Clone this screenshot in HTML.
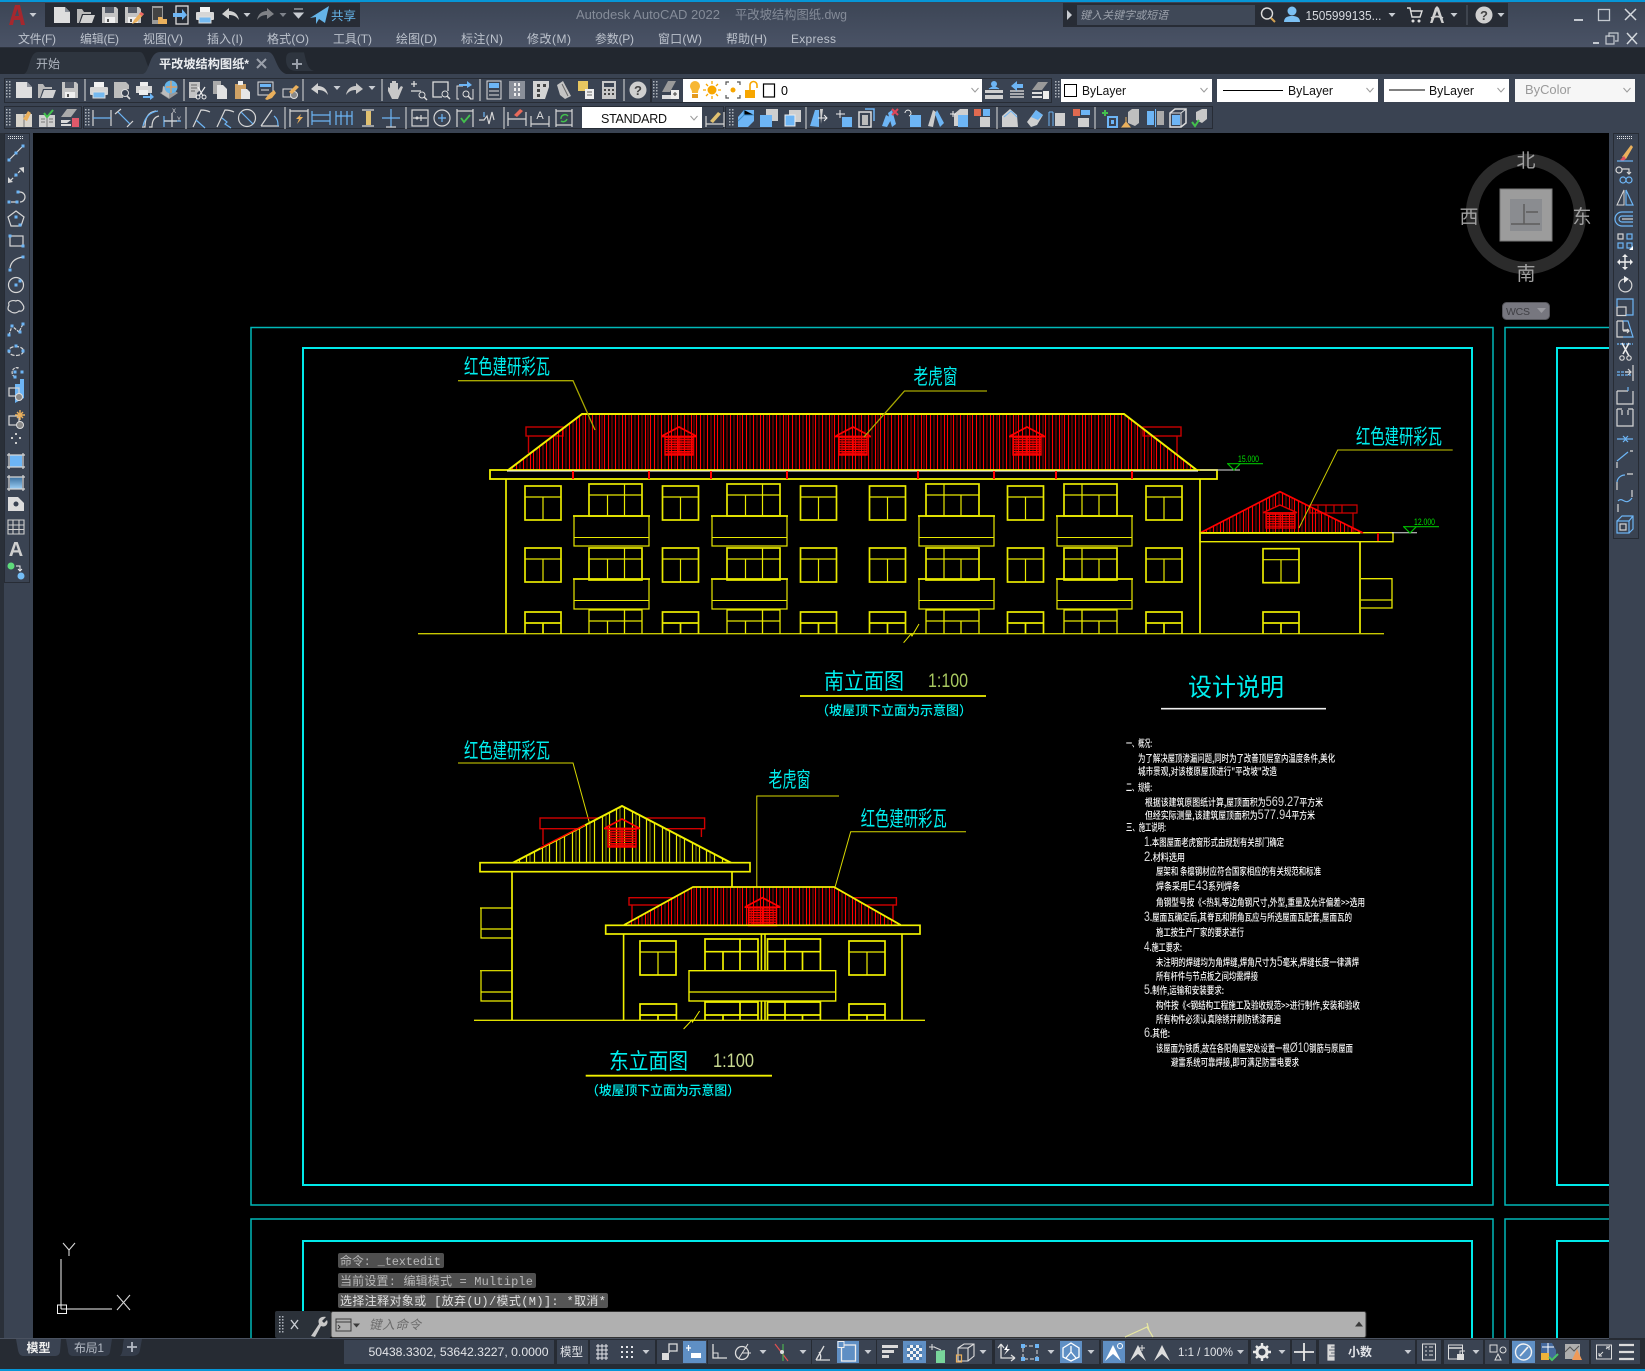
<!DOCTYPE html>
<html><head><meta charset="utf-8"><title>AutoCAD 2022</title>
<style>
html,body{margin:0;padding:0;background:#000;width:1645px;height:1371px;overflow:hidden}
svg{display:block}
text{font-family:"Liberation Sans","Noto Sans CJK SC",sans-serif}
.m{font-size:12px;fill:#bcc2cc}
.cad{fill:#00eeee;font-family:"Noto Sans CJK SC","Liberation Sans",sans-serif;font-weight:400}
.sub{font-weight:500}
.n{font-size:10px;fill:#f6f6f6;font-weight:500;font-family:"Noto Sans CJK SC","Liberation Sans",sans-serif}
.n tspan{font-size:14px;font-family:"Liberation Sans",sans-serif;font-weight:400;fill:#d8d8d8}
.cm{font-family:"Liberation Mono","Noto Sans CJK SC",monospace;font-size:12px;fill:#b8b8b8}
.bar{fill:#3a4352;stroke:#272c35;stroke-width:1}
.sb{fill:#3a4352}
.hi{fill:#5f8fc4}
.st{font-size:12px;fill:#e2e4e8}
.l{fill:none;stroke:#d6d6d6;stroke-width:1.2}
.b{fill:none;stroke:#6db5f5;stroke-width:1.2}
</style></head><body>
<svg xmlns="http://www.w3.org/2000/svg" width="1645" height="1371" viewBox="0 0 1645 1371">
<defs>
<linearGradient id="tg" x1="0" y1="0" x2="0" y2="1"><stop offset="0" stop-color="#3c4555"/><stop offset="1" stop-color="#4a5366"/></linearGradient>
<pattern id="rf" width="46" height="10" patternUnits="userSpaceOnUse">
<path d="M1.5 0v10M6.5 0v10M10.5 0v10M17.5 0v10M24.5 0v10M27.5 0v10M33.5 0v10M40.5 0v10" stroke="#f00" stroke-width="1.1"/><path d="M4 0v10M14 0v10M21 0v10M31 0v10M37 0v10M44 0v10" stroke="#a00000" stroke-width="1"/>
</pattern>
<pattern id="ry" width="30" height="10" patternUnits="userSpaceOnUse">
<path d="M2.5 0v10M9.5 0v10M16.5 0v10M24.5 0v10" stroke="#e8e800" stroke-width="1.2"/><path d="M6 0v10M20 0v10" stroke="#8c8c00" stroke-width="1"/>
</pattern>
<pattern id="sl" width="4" height="2.4" patternUnits="userSpaceOnUse"><rect width="4" height="1.2" fill="#f00"/></pattern>
<g id="dm" fill="none" stroke="#f00" stroke-width="1.4"><path d="M-17 9L0 0L17 9M-18 9.5H18" stroke-width="1.7"/><rect x="-14" y="10" width="28" height="18" fill="url(#sl)"/><path d="M0 10v18"/><rect x="-11" y="12" width="22" height="14" fill="url(#sl)" stroke="#d00" stroke-width=".8"/></g>
<g id="ws"><rect width="36" height="34"/><path d="M0 11H36M18 11V34" stroke-width="1.2"/></g>
<g id="wsb"><path d="M0 22V0H36V22M0 11H36M18 11V22" /></g>
<g id="wl"><rect width="53" height="32"/><path d="M0 11H53M35.5 0V32M18.5 11V32" stroke-width="1.2"/></g>
<g id="wr"><rect width="53" height="32"/><path d="M0 11H53M18 0V32M35 11V32" stroke-width="1.2"/></g>
<g id="wlb"><path d="M0 24V0H53V24M0 11H53M35.5 0V24M18.5 11V24" stroke-width="1.3"/></g>
<g id="wrb"><path d="M0 24V0H53V24M0 11H53M18 0V24M35 11V24" stroke-width="1.3"/></g>
<g id="bl"><rect width="75" height="30" stroke-width="1.2"/><path d="M-1 0H76" stroke-width="1.8"/><path d="M0 21.5H75" stroke-width="1.1"/></g>

<g id="new"><path d="M-8-8H3L8-3V8H-8z" fill="#dedede"/><path d="M3-8V-3H8" fill="#8a8f98"/></g>
<g id="open"><path d="M-9 8V-6H-4L-2-3H5V-1H-4L-7 8z" fill="#b8b8b8"/><path d="M-6 8L-3 0H9L6 8z" fill="#d2d2d2"/></g>
<g id="save"><path d="M-8-8H6L8-6V8H-8z" fill="#c4c4c4"/><rect x="-5" y="-8" width="9" height="6" fill="#555c69"/><rect x="-5" y="2" width="10" height="6" fill="#efefef"/><rect x="-3" y="4" width="2" height="3" fill="#555"/></g>
<g id="saves"><use href="#save"/><path d="M-1 9L1 5 8-3 11-1 4 7z" fill="#eab05c"/><path d="M8-3L11-1 9 1 6-1z" fill="#e66"/></g>
<g id="plot"><rect x="-5" y="-8" width="10" height="5" fill="#f2f2f2"/><rect x="-9" y="-3" width="18" height="8" fill="#d6d6d6" rx="1"/><rect x="-6" y="2" width="12" height="6" fill="#74b9f0" stroke="#ddd"/></g>
<g id="prev"><path d="M-8-8H4L7-5V-1L1 0V8H-8z" fill="#bdbdbd"/><circle cx="3" cy="3" r="3.5" fill="#3a4352" stroke="#ddd"/><path d="M5 6L8 9" stroke="#ddd" stroke-width="1.6"/></g>
<g id="pub"><rect x="-4" y="-8" width="8" height="4" fill="#eee"/><rect x="-8" y="-4" width="16" height="7" fill="#d6d6d6"/><rect x="-5" y="0" width="9" height="5" fill="#eee"/><path d="M-1 6H6V3L10 7 6 10V8H-1z" fill="#6db5f5"/></g>
<g id="d3"><path d="M-9 3L0-3 9 3 0 9z" fill="#9a9a9a"/><path d="M-7 4L0 8V-1L-6 -4z" fill="#bcbcbc"/><circle cx="2" cy="-3" r="6.5" fill="#65b4e8"/><path d="M-3-3H8M2-9V3" stroke="#ee9b50" stroke-width="1.2"/></g>
<g id="cut"><path d="M-8-8H3V0L0 3V8H-8z" fill="#c4c4c4"/><path d="M-6-5H0M-6-2H0M-6 1H-2" stroke="#666"/><path d="M1-3L6 6M8-3L2 6" stroke="#eee" stroke-width="1.2"/><circle cx="1" cy="7" r="2" fill="none" stroke="#eee"/><circle cx="7" cy="7" r="2" fill="none" stroke="#eee"/></g>
<g id="copy"><path d="M-7-9H1V4H-7z" fill="#aaa"/><path d="M-3-5H3L7-1V9H-3z" fill="#e2e2e2"/></g>
<g id="paste"><rect x="-7" y="-6" width="11" height="15" fill="#d0a265"/><rect x="-4" y="-9" width="5" height="4" fill="#eee"/><path d="M-1-1H5L8 2V9H-1z" fill="#e6e6e6"/></g>
<g id="mp"><rect x="-8" y="-8" width="15" height="13" fill="none" stroke="#ddd"/><rect x="-6" y="-6" width="11" height="3" fill="#6db5f5"/><path d="M-5 0H3" stroke="#ddd"/><path d="M-1 9L3 4 8 0 10 3 6 8 1 10z" fill="#eab05c"/></g>
<g id="blk"><rect x="-7" y="-1" width="10" height="8" fill="none" stroke="#ddd"/><circle cx="4" cy="5" r="3.5" fill="#888" stroke="#ddd"/><path d="M-1 2L6-5 9-3 2 4z" fill="#eab05c"/></g>
<path id="und" d="M-8-1L-1-7V-4C4-4 8-1 9 5 6 1 3 0-1 0V4z" fill="#d0d0d0"/>
<path id="red" d="M8-1L1-7V-4C-4-4-8-1-9 5-6 1-3 0 1 0V4z" fill="#c8c8c8"/>
<path id="ar" d="M-3.5-2H3.5L0 2z" fill="#c8ccd2"/>
<path id="chv" d="M-3.5-2L0 2 3.5-2" fill="none" stroke="#9a9a9a" stroke-width="1"/>
<path id="pan" d="M-7 1V-3L-5-2V-7H-3V-2-9H-1V-3-9H1V-2-7H3V0L6-4 8-3 3 9H-3z" fill="#c8c8c8"/>
<g id="zr"><path d="M-7-6H-1M-4-9V-3M-7 1H3" stroke="#ddd" stroke-width="1.3"/><circle cx="4" cy="5" r="3" fill="none" stroke="#ddd"/><path d="M6 7L9 10" stroke="#ddd" stroke-width="1.4"/></g>
<g id="zw"><path d="M1 7H-8V-8H7V1" fill="none" stroke="#ddd" stroke-width="1.3"/><circle cx="4" cy="4" r="3" fill="none" stroke="#ddd"/><path d="M6 6L9 9" stroke="#ddd" stroke-width="1.4"/></g>
<g id="zp"><path d="M-6 9H-8V-4H-2M8-1V9H5" fill="none" stroke="#ddd"/><path d="M-6-6H2V-9L7-5 2-2V-4H-6z" fill="#6db5f5"/><circle cx="1" cy="4" r="3" fill="none" stroke="#ddd"/><path d="M3 6L6 9" stroke="#ddd" stroke-width="1.4"/></g>
<g id="prop"><rect x="-7" y="-9" width="14" height="18" fill="none" stroke="#ddd"/><rect x="-5" y="-7" width="10" height="5" fill="#6db5f5"/><path d="M-5 1H5M-5 5H5" stroke="#ddd"/></g>
<g id="dc"><rect x="-8" y="-9" width="16" height="18" fill="#8b909a"/><path d="M-3-7h2v3h-2zM1-7h2v3H1zM-3-2h2v3h-2zM1-2h2v3H1zM-3 3h2v3h-2zM1 3h2v3H1z" fill="#eee"/></g>
<g id="tp"><path d="M-8-9H8V-3L4 9H-8z" fill="#d4d4d4"/><path d="M-4-6h3v3h-3zM-4-1h3v3h-3zM-4 4h3v3h-3zM2-6h3v3H2z" fill="#444"/></g>
<g id="ss"><path d="M-7-5L-1-9 7 6 1 9-4 5z" fill="#c4c4c4"/><path d="M-2-6L4 6" stroke="#666"/></g>
<g id="mk"><rect x="-8" y="-9" width="10" height="10" fill="#e7c660"/><rect x="-1" y="-1" width="9" height="10" fill="#eee"/><path d="M1 2H6M1 5H6" stroke="#666"/></g>
<g id="calc"><rect x="-7" y="-9" width="14" height="18" fill="#c8c8c8"/><rect x="-5" y="-7" width="10" height="4" fill="#3a4352"/><path d="M-5-1h2v2h-2zM-1-1h2v2h-2zM3-1h2v2H3zM-5 3h2v2h-2zM-1 3h2v2h-2zM3 3h2v2H3z" fill="#444"/></g>
<g id="hp"><circle r="8.5" fill="#cfcfcf"/><text y="5" text-anchor="middle" font-size="13" font-weight="bold" style="fill:#444">?</text></g>
<g id="lay"><path d="M-8 2L-2-9H6L0 2z" fill="#9a9a9a"/><path d="M-8 5H1V9H-8z" fill="#ddd"/><rect x="1" y="0" width="8" height="9" fill="#eee"/><path d="M3 4H7M5 2V6" stroke="#444"/></g>
<g id="lm"><path d="M-9 9H9V5H-9zM-9 3H9V0H-9z" fill="#cfcfcf"/><circle cx="0" cy="-6" r="3" fill="#6db5f5"/><path d="M-5-1Q0-5 5-1" fill="#6db5f5" stroke="#6db5f5"/></g>
<g id="lp"><path d="M-7 4H7M-7 7H7M-7 1H7" stroke="#ccc" stroke-width="1.6"/><path d="M-6-4L0-9V-6H6V-2H0V1z" fill="#6db5f5"/></g>
<g id="lt"><path d="M-8 0L-2-8H8L2 0z" fill="#9a9a9a"/><path d="M-8 2H2V4H-8zM-8 6H2V8H-8z" fill="#ddd"/><rect x="3" y="1" width="6" height="8" fill="#eee"/></g>

<g id="e1"><rect x="-8" y="-4" width="16" height="13" fill="#d8d4cc"/><path d="M0-4V9" stroke="#777"/><path d="M-1 1L4-7 7-5 3 3z" fill="#eab05c"/></g>
<g id="e2"><rect x="-8" y="-3" width="16" height="12" fill="#cfcfcf"/><path d="M0-3V9M-6 1H-2M-6 4H-2M2 1H6M2 4H6" stroke="#777"/><path d="M-3-5L0-1 6-8" stroke="#43c14d" stroke-width="2" fill="none"/></g>
<g id="e3"><path d="M-9-1L-3-9H7L1-1z" fill="#aaa"/><path d="M-9 2H1L-3 5H-9zM-9 6H1V8H-9z" fill="#d8d8d8"/><rect x="2" y="0" width="7" height="9" fill="#e0596a"/></g>
<g id="dl"><path d="M-9-8V8M9-8V8" class="l"/><path d="M-9 0H9" class="b"/></g>
<g id="da"><path d="M-9-4L-3-9M3 9L9 3" class="l"/><path d="M-6-6L6 6" class="b"/></g>
<g id="dr"><path d="M-8 9H-5C-5 0-2-6 6-7M-1 9H2C2 3 4-1 9-2" class="l" stroke-width="1"/><path d="M-7 8C-5-1 0-6 8-7" class="b"/></g>
<g id="do"><path d="M-8 9V-2M-8 3H9" class="b"/><path d="M0-5V9M-8 3H5" class="l" stroke-width="1"/><text x="0" y="-5" font-size="6" style="fill:#ddd">X</text><text x="5" y="3" font-size="6" style="fill:#ddd">Y</text></g>
<g id="dar"><path d="M-8 9L0-8C4-8 7-7 9-6" class="l"/><path d="M-5 2L4 10" class="b"/></g>
<g id="dj"><path d="M-8 9L0-8C4-8 7-7 9-6" class="l"/><path d="M-3 0L2 4 0 6 6 10" class="b"/></g>
<g id="dd"><circle r="8.5" class="l"/><path d="M-6-6L6 6" class="b"/></g>
<g id="dg"><path d="M-9 8H9M-9 8L2-8" class="l"/><path d="M4-2C8 1 8 5 8 8" class="b"/></g>
<g id="dq"><path d="M-9-9V9M9-9V9M-9-7H9" class="l"/><path d="M2-4L-3 1H0L-2 6 4-1H1z" fill="#eab05c"/></g>
<g id="db"><path d="M-9-7V7M9-7V7M-9-3H9M-9 3H9" class="b"/></g>
<g id="dc2"><path d="M-8-7V7M-3-7V7M3-7V7M8-7V7M-8-2H8" class="b"/></g>
<g id="dsp"><path d="M-6-8H6M-6 8H6" class="l"/><rect x="-2" y="-7" width="5" height="14" fill="#e0c070"/></g>
<g id="dbk"><path d="M0-9V9M-9 0H9" class="b"/><path d="M-5 9H5" class="l"/></g>
<g id="dtl"><rect x="-8" y="-8" width="16" height="16" class="l"/><circle cx="-3" cy="0" r="1.5" fill="#ddd"/><path d="M-7 0H7M1-3V3" class="l" stroke-width="1"/></g>
<g id="dcm"><circle r="8" class="l"/><path d="M-4 0H4M0-4V4" class="b"/></g>
<g id="din"><path d="M-8-9V9M8-9V9M-8-7H8" class="l"/><path d="M-4 0L-1 4 5-3" stroke="#43c14d" stroke-width="1.8" fill="none"/></g>
<g id="djg"><path d="M-9 2H-4L-1-2 1 6 4-6 6 2" class="l"/><path d="M-4-6V-1" class="b"/></g>
<g id="dte"><path d="M-9-6V8M9-6V8M-9 1H9" class="l"/><path d="M-3-3L3-9 6-7 0-1z" fill="#e96a5a"/></g>
<g id="dta"><path d="M-9-2V9M9-2V9M-9 6H9" class="l"/><text y="1" text-anchor="middle" font-size="11" style="fill:#ddd">A</text></g>
<g id="du"><path d="M-8-9V9M8-9V9M-8-7H8M-8 7H8" class="l"/><path d="M-3 1A4 4 0 0 1 4-2M3 1A4 4 0 0 1-3 3" stroke="#43c14d" stroke-width="1.4" fill="none"/></g>
<g id="dst"><path d="M-9-2V9M9-6V9M-9 6H9" class="l"/><path d="M-5 3L3-6 6-4-2 5z" fill="#e0c070"/></g>
<g id="c1"><path d="M-8 9V-1L-2-8H8V3L2 9z" fill="#6db5f5"/><path d="M-2-8V-3H8M-2-3L-8 3" stroke="#3a8ac8"/></g>
<g id="c2"><path d="M-3 3V-9H9V3z" fill="#cfcfcf"/><path d="M-9 9V-3H3V9z" fill="#6db5f5"/></g>
<g id="c3"><path d="M-3 4V-8H9V4z" fill="#cfcfcf"/><rect x="-7" y="-3" width="10" height="11" fill="#6db5f5" stroke="#eee"/></g>
<g id="c4"><path d="M-8 8L-3-8H1V9z" fill="#6db5f5"/><path d="M2-9H5L3 6z" fill="#ccc"/><path d="M0 0H9M6-3L9 0 6 3" stroke="#eee" fill="none"/></g>
<g id="c5"><path d="M-8-4H0M-4-8V0" stroke="#eee" fill="none"/><rect x="-2" y="-1" width="10" height="10" fill="#6db5f5"/><path d="M-4-4H1" stroke="#eee"/></g>
<g id="c6"><rect x="-7" y="-6" width="12" height="15" fill="none" stroke="#ddd" stroke-width="1.5"/><rect x="-4" y="-3" width="6" height="10" fill="#bbb"/><path d="M-1-9H8V3" stroke="#6db5f5" stroke-width="1.5" fill="none"/></g>
<g id="c7"><path d="M-8 8L-4-3 2 0-3 9zM-2-5L2-8 6 6 2 9z" fill="#6db5f5"/><path d="M2-9L8-3M8-9L2-3" stroke="#e0465a" stroke-width="2"/></g>
<g id="c8"><path d="M-8-5A3 3 0 1 1-4-2" stroke="#eee" fill="none"/><rect x="-3" y="-3" width="11" height="12" fill="#6db5f5"/></g>
<g id="c9"><path d="M-8 8L-3-8 0-6-3 9z" fill="#ccc"/><path d="M1-8L8 5 4 9-1-4z" fill="#6db5f5"/></g>
<g id="c10"><path d="M-5-4L1-9H9V3L4 8H-5z" fill="#cfcfcf"/><rect x="-1" y="-3" width="10" height="12" fill="#6db5f5"/><path d="M-9-4H-3M-6-7V-1" stroke="#eee"/></g>
<g id="c11"><rect x="-8" y="-9" width="7" height="7" fill="#e06a50"/><rect x="1" y="-9" width="7" height="7" fill="#6db5f5"/><rect x="-2" y="-1" width="10" height="10" fill="#cfcfcf"/></g>
<g id="c12"><path d="M-8 9V-2L0-9 7-3 8 9z" fill="#cfcfcf"/><path d="M-6-1L1-7 7-1" stroke="#6db5f5" fill="none"/></g>
<g id="c13"><path d="M-7 4L2-8 9-3 3 7-3 9z" fill="#cfcfcf"/><path d="M-3-1L2-8 9-3 4 2z" fill="#6db5f5"/></g>
<g id="c14"><rect x="-2" y="-5" width="10" height="13" fill="#cfcfcf"/><path d="M-8-6V8M-4-6V8M-8-6H-4" stroke="#6db5f5" fill="none"/></g>
<g id="c15"><path d="M0-8H9V-3H0z" fill="#6db5f5"/><rect x="-8" y="-9" width="7" height="7" fill="#e06a50"/><rect x="-3" y="0" width="11" height="9" fill="#cfcfcf"/></g>
<g id="c16"><path d="M-9-5H-3M-6-8V-2" stroke="#43c14d" stroke-width="2"/><rect x="-3" y="-1" width="9" height="10" fill="none" stroke="#6db5f5" stroke-width="2"/><rect x="0" y="2" width="3" height="4" fill="#6db5f5"/></g>
<g id="c17"><path d="M-3 5V-6L1-9H8V5L4 8z" fill="#bfbfbf"/><path d="M-5-1V4M-9 9L-5 4-1 9z" fill="#eab05c" stroke="#eab05c"/></g>
<g id="c18"><rect x="-8" y="-7" width="7" height="14" fill="#6db5f5"/><rect x="2" y="-7" width="7" height="14" fill="#aaa"/><path d="M.5-9V9" stroke="#6db5f5"/></g>
<g id="c19"><path d="M-8-5L-3-9H8V5L3 9H-8z" fill="none" stroke="#ddd" stroke-width="1.5"/><rect x="-6" y="-3" width="8" height="10" fill="#6db5f5"/><path d="M-8-5H3V9M3-5L8-9" stroke="#ddd" fill="none"/></g>
<g id="c20"><path d="M-4 2V-6L2-9H7V1L2 5z" fill="#c8c8c8"/><path d="M-8 4L-5 8-1 2" stroke="#43c14d" stroke-width="2" fill="none"/></g>
<path id="dot" d="M-1.5-1.5h3v3h-3z" fill="#6db5f5"/>
<g id="hd" fill="#aeb4bc"><rect x="-2" y="-9" width="1.5" height="1.5"/><rect x="1" y="-9" width="1.5" height="1.5"/><rect x="-2" y="-6" width="1.5" height="1.5"/><rect x="1" y="-6" width="1.5" height="1.5"/><rect x="-2" y="-3" width="1.5" height="1.5"/><rect x="1" y="-3" width="1.5" height="1.5"/><rect x="-2" y="0" width="1.5" height="1.5"/><rect x="1" y="0" width="1.5" height="1.5"/><rect x="-2" y="3" width="1.5" height="1.5"/><rect x="1" y="3" width="1.5" height="1.5"/><rect x="-2" y="6" width="1.5" height="1.5"/><rect x="1" y="6" width="1.5" height="1.5"/></g>
<g id="sep"><path d="M0-11V11" stroke="#dcdcdc" stroke-width="1"/></g>
<linearGradient id="gd" x1="0" y1="0" x2="0" y2="1"><stop offset="0" stop-color="#3a6f9e"/><stop offset="1" stop-color="#9ccff5"/></linearGradient>
</defs>

<!-- app chrome base -->
<rect width="1645" height="1371" fill="#3a4352"/>
<rect y="0" width="1645" height="2" fill="#0696d7"/>
<rect y="2" width="1645" height="46" fill="url(#tg)"/>
<rect y="48" width="1645" height="26" fill="#22272f"/>
<rect y="47" width="1645" height="1" fill="#2c323c"/>

<!-- title bar -->
<path d="M9 25L15 5H20L25 25H21L20 20H14L13 25zM15 16H19L17.5 9z" fill="#a5282e"/>
<use href="#ar" x="33" y="15"/>
<rect x="45" y="3" width="315" height="24" fill="#272c35"/>
<use href="#new" x="62" y="15"/><use href="#open" x="86" y="15"/><use href="#save" x="110" y="15"/><use href="#saves" x="133" y="15"/>
<g transform="translate(158 15)"><rect x="-6" y="-9" width="11" height="18" fill="#9a9a9a"/><rect x="-5" y="-7" width="9" height="12" fill="#444"/><path d="M0 2H4L5 4H9V9H0z" fill="#eab05c"/></g>
<g transform="translate(182 15)"><rect x="-6" y="-9" width="12" height="18" fill="none" stroke="#ddd" stroke-width="1.3"/><path d="M-9-2H0V-6L5 0 0 5V2H-9z" fill="#6db5f5"/></g>
<use href="#plot" x="205" y="15"/><use href="#und" x="230" y="15"/><use href="#ar" x="247" y="15"/><use href="#red" x="266" y="15" opacity=".55"/><use href="#ar" x="283" y="15" opacity=".55"/>
<path d="M294 9h9M294 13h9l-4.500 5z" fill="#c8ccd2" stroke="#c8ccd2"/>
<path d="M310 18L329 6 325 23 319 19 316 24V17z" fill="#65b4e8"/>
<text x="331" y="20" font-size="12" textLength="25" lengthAdjust="spacingAndGlyphs" style="fill:#65b4e8">共享</text>
<text x="576" y="19" font-size="13" textLength="144" lengthAdjust="spacingAndGlyphs" style="fill:#858c99">Autodesk AutoCAD 2022</text>
<text x="735" y="19" font-size="12.500" textLength="112" lengthAdjust="spacingAndGlyphs" style="fill:#858c99">平改坡结构图纸.dwg</text>
<rect x="1063" y="3" width="445" height="24" fill="#272c35"/>
<path d="M1067 10L1072 15 1067 20z" fill="#c8ccd2"/>
<rect x="1077" y="5" width="178" height="20" fill="#3f4857"/>
<text x="1080" y="19" font-size="11" font-style="italic" textLength="88" style="fill:#9aa0aa">键入关键字或短语</text>
<circle cx="1267" cy="13.500" r="5.500" fill="none" stroke="#ddd" stroke-width="1.4"/><path d="M1271 18L1275 22" stroke="#d2a050" stroke-width="2"/>
<circle cx="1292" cy="11" r="4.500" fill="#7cc0f2"/><path d="M1284 22C1284 17 1288 16 1292 16S1300 17 1300 22z" fill="#7cc0f2"/>
<text x="1305.500" y="20" font-size="12.500" textLength="76" lengthAdjust="spacingAndGlyphs" style="fill:#d8dbe0">1505999135...</text>
<use href="#ar" x="1392" y="15"/>
<path d="M1407 8H1410L1412 17H1420L1422 11H1411" fill="none" stroke="#ddd" stroke-width="1.4"/><circle cx="1413" cy="21" r="1.500" fill="#ddd"/><circle cx="1419" cy="21" r="1.500" fill="#ddd"/>
<path d="M1430 23L1435 8 1437 6 1439 8 1444 23H1441.500L1437 11 1432.500 23z" fill="#d0d0d0"/><path d="M1431 18Q1437 15 1443 18" stroke="#d0d0d0" stroke-width="1.800" fill="none"/>
<use href="#ar" x="1454" y="15"/>
<path d="M1467 5V25" stroke="#555c68"/>
<use href="#hp" x="1484" y="15"/><use href="#ar" x="1501" y="15"/>
<path d="M1574 20H1583" stroke="#c4c9d0" stroke-width="2"/>
<rect x="1598.500" y="9.500" width="11" height="11" fill="none" stroke="#c4c9d0" stroke-width="1.300"/>
<path d="M1625 9L1636 20M1636 9L1625 20" stroke="#d4d8dd" stroke-width="1.500"/>
<path d="M1593 43H1599" stroke="#c4c9d0" stroke-width="2"/>
<path d="M1609 37V33H1618V41H1615M1606 36H1614V44H1606z" fill="none" stroke="#c4c9d0" stroke-width="1.200"/>
<path d="M1627 33L1637 44M1637 33L1627 44" stroke="#d4d8dd" stroke-width="1.500"/>

<!-- menu -->
<text class="m" x="18" y="43" textLength="38">文件(F)</text>
<text class="m" x="80" y="43" textLength="39">编辑(E)</text>
<text class="m" x="143" y="43" textLength="40">视图(V)</text>
<text class="m" x="207" y="43" textLength="36">插入(I)</text>
<text class="m" x="267" y="43" textLength="42">格式(O)</text>
<text class="m" x="333" y="43" textLength="39">工具(T)</text>
<text class="m" x="396" y="43" textLength="41">绘图(D)</text>
<text class="m" x="461" y="43" textLength="42">标注(N)</text>
<text class="m" x="527" y="43" textLength="44">修改(M)</text>
<text class="m" x="595" y="43" textLength="39">参数(P)</text>
<text class="m" x="658" y="43" textLength="44">窗口(W)</text>
<text class="m" x="726" y="43" textLength="41">帮助(H)</text>
<text class="m" x="791" y="43" textLength="45">Express</text>

<!-- doc tabs -->
<path d="M24 74C30 72 29 52 38 52H140C146 52 146 70 154 74z" fill="#2e353f"/>
<path d="M143 74C150 72 149 52 160 52H268C276 52 275 70 286 74z" fill="#3a4352"/>
<path d="M286 60C286 54 288 52 292 52H304C306 60 307 70 314 72H296C290 72 286 68 286 60z" fill="#2e353f" transform="translate(0 4) scale(1 .93)"/>
<text x="36" y="68" font-size="12" textLength="24" style="fill:#b0b6c0">开始</text>
<text x="159" y="68" font-size="12" textLength="90" lengthAdjust="spacingAndGlyphs" font-weight="bold" style="fill:#eceef1">平改坡结构图纸*</text>
<path d="M257 59L266 68M266 59L257 68" stroke="#9aa0aa" stroke-width="2"/>
<path d="M297 59V69M292 64H302" stroke="#9aa0aa" stroke-width="2"/>

<!-- toolbar row 1 -->
<rect x="4.500" y="78.500" width="646" height="24" class="bar"/>
<rect x="651.500" y="78.500" width="400" height="24" class="bar"/>
<rect x="1055.500" y="78.500" width="581" height="24" class="bar" style="stroke:none"/>
<use href="#hd" x="8" y="90"/>
<use href="#new" x="24" y="90"/><use href="#open" x="47" y="90"/><use href="#save" x="70" y="90"/><use href="#sep" x="85" y="90"/>
<use href="#plot" x="99" y="90"/><use href="#prev" x="122" y="90"/><use href="#pub" x="144" y="90"/><use href="#d3" x="169" y="90"/><use href="#sep" x="184" y="90"/>
<use href="#cut" x="197" y="90"/><use href="#copy" x="220" y="90"/><use href="#paste" x="242" y="90"/><use href="#mp" x="266" y="90"/><use href="#blk" x="290" y="90"/><use href="#sep" x="303" y="90"/>
<use href="#und" x="319" y="90"/><use href="#ar" x="337" y="88"/><use href="#red" x="355" y="90"/><use href="#ar" x="372" y="88"/><use href="#sep" x="382" y="90"/>
<use href="#pan" x="395" y="90"/><use href="#zr" x="418" y="90"/><use href="#zw" x="441" y="90"/><use href="#zp" x="465" y="90"/><use href="#sep" x="480" y="90"/>
<use href="#prop" x="494" y="90"/><use href="#dc" x="517" y="90"/><use href="#tp" x="541" y="90"/><use href="#ss" x="564" y="90"/><use href="#mk" x="586" y="90"/><use href="#calc" x="609" y="90"/><use href="#sep" x="624" y="90"/><use href="#hp" x="638" y="90"/>
<use href="#hd" x="655" y="90"/><use href="#lay" x="670" y="90"/>
<rect x="683" y="79" width="299" height="23" fill="#fff"/>
<g transform="translate(695 90)"><path d="M-3 3C-3-1-5-1-5-4A5 5 0 0 1 5-4C5-1 3-1 3 3z" fill="#f7b733"/><path d="M-3 4H3V8H-3z" fill="#e49a1e"/></g>
<g transform="translate(712 90)"><circle r="4.500" fill="#f7a600"/><path d="M0-9V-6M0 6V9M-9 0H-6M6 0H9M-6-6L-4-4M6-6L4-4M-6 6L-4 4M6 6L4 4" stroke="#f7a600" stroke-width="1.300"/></g>
<g transform="translate(733 90)"><path d="M-7-5V-8H-4M4-8H7V-5M7 5V8H4M-4 8H-7V5" fill="none" stroke="#555" stroke-width="1.200"/><circle r="2.500" fill="#f7a600"/></g>
<g transform="translate(751 90)"><rect x="-6" y="0" width="10" height="8" fill="#f7a600"/><path d="M-1 0V-5A3.500 3.500 0 0 1 6-5V-2" fill="none" stroke="#f7a600" stroke-width="1.600"/></g>
<rect x="763.500" y="84" width="11" height="13" fill="#fff" stroke="#000" stroke-width="1.200"/>
<text x="781" y="95" font-size="12.500" style="fill:#000">0</text>
<use href="#chv" x="975" y="90"/>
<use href="#lm" x="994" y="90"/><use href="#lp" x="1017" y="90"/><use href="#lt" x="1040" y="90"/>
<use href="#hd" x="1057" y="90"/>
<rect x="1061" y="79" width="151" height="23" fill="#fff"/><rect x="1064.500" y="84.500" width="12" height="12" fill="#fff" stroke="#000"/>
<text x="1082" y="95" font-size="12.500" textLength="44" lengthAdjust="spacingAndGlyphs" style="fill:#111">ByLayer</text><use href="#chv" x="1204" y="90"/>
<rect x="1217" y="79" width="161" height="23" fill="#fff"/><path d="M1223 90.500H1283" stroke="#000"/>
<text x="1288" y="95" font-size="12.500" textLength="45" lengthAdjust="spacingAndGlyphs" style="fill:#111">ByLayer</text><use href="#chv" x="1370" y="90"/>
<rect x="1384" y="79" width="125" height="23" fill="#fff"/><path d="M1389 90H1425" stroke="#000"/>
<text x="1429" y="95" font-size="12.500" textLength="45" lengthAdjust="spacingAndGlyphs" style="fill:#111">ByLayer</text><use href="#chv" x="1501" y="90"/>
<rect x="1515" y="79" width="120" height="23" fill="#f6f6f6"/>
<text x="1525" y="94" font-size="12.500" textLength="46" lengthAdjust="spacingAndGlyphs" style="fill:#9a9a9a">ByColor</text><use href="#chv" x="1627" y="90"/>

<!-- toolbar row 2 -->
<rect x="4.500" y="106.500" width="77" height="22" class="bar"/>
<rect x="83.500" y="106.500" width="640" height="22" class="bar"/>
<rect x="725.500" y="106.500" width="487" height="22" class="bar"/>
<use href="#hd" x="8" y="118"/><use href="#e1" x="24" y="118"/><use href="#e2" x="47" y="118"/><use href="#e3" x="70" y="118"/>
<use href="#hd" x="87" y="118"/><use href="#dl" x="102" y="118"/><use href="#da" x="124" y="118"/><use href="#dr" x="150" y="118"/><use href="#do" x="172" y="118"/><use href="#sep" x="186" y="118"/>
<use href="#dar" x="201" y="118"/><use href="#dj" x="225" y="118"/><use href="#dd" x="247" y="118"/><use href="#dg" x="270" y="118"/><use href="#sep" x="285" y="118"/>
<use href="#dq" x="299" y="118"/><use href="#db" x="321" y="118"/><use href="#dc2" x="344" y="118"/><use href="#dsp" x="368" y="118"/><use href="#dbk" x="391" y="118"/><use href="#sep" x="406" y="118"/>
<use href="#dtl" x="420" y="118"/><use href="#dcm" x="442" y="118"/><use href="#din" x="465" y="118"/><use href="#djg" x="488" y="118"/><use href="#sep" x="504" y="118"/>
<use href="#dte" x="517" y="118"/><use href="#dta" x="540" y="118"/><use href="#du" x="564" y="118"/>
<rect x="582" y="107" width="120" height="21" fill="#fff"/>
<text x="601" y="123" font-size="12.500" textLength="66" style="fill:#111">STANDARD</text><use href="#chv" x="694" y="118"/>
<use href="#dst" x="715" y="118"/>
<use href="#hd" x="731" y="118"/>
<use href="#c1" x="746" y="118"/><use href="#c2" x="769" y="118"/><use href="#c3" x="792" y="118"/><use href="#sep" x="806" y="118"/>
<use href="#c4" x="818" y="118"/><use href="#c5" x="844" y="118"/><use href="#c6" x="866" y="118"/><use href="#c7" x="890" y="118"/><use href="#c8" x="913" y="118"/><use href="#c9" x="936" y="118"/><use href="#c10" x="959" y="118"/><use href="#c11" x="982" y="118"/><use href="#sep" x="997" y="118"/>
<use href="#c12" x="1010" y="118"/><use href="#c13" x="1034" y="118"/><use href="#c14" x="1057" y="118"/><use href="#c15" x="1081" y="118"/><use href="#sep" x="1095" y="118"/>
<use href="#c16" x="1111" y="118"/><use href="#c17" x="1131" y="118"/><use href="#c18" x="1155" y="118"/><use href="#c19" x="1178" y="118"/><use href="#c20" x="1200" y="118"/>

<!-- side panels -->
<rect y="133" width="4" height="1205" fill="#2a3039"/>
<rect x="4.500" y="133.500" width="25" height="449" class="bar"/>
<rect x="1613.500" y="133.500" width="25" height="405" class="bar"/>

<!-- canvas -->
<rect x="33" y="133" width="1576" height="1205" fill="#000"/>

<!-- frames -->
<g fill="none">
<g stroke="#00b8b8" stroke-width="1.500"><rect x="251" y="327.500" width="1242" height="877.500"/><path d="M1609 327.500H1505V1205H1609"/><path d="M251 1338V1219H1493V1338M1505 1338V1219H1609"/></g>
<g stroke="#00eaea" stroke-width="2"><rect x="303" y="348" width="1169" height="837"/><path d="M1609 348H1557V1185H1609"/><path d="M303 1338V1241H1472V1338M1557 1338V1241H1609"/></g>
</g>

<!-- SOUTH ELEVATION -->
<g fill="none" stroke="#c80000" stroke-width="1.400"><rect x="526" y="427" width="37" height="9"/><path d="M528.500 436V453"/><rect x="1143" y="427" width="38" height="9"/><path d="M1177 436V455"/></g>
<polygon points="582,414 1124,414 1198,470 507,470" fill="url(#rf)"/>
<path d="M507 471L582 414H1124L1198 471" fill="none" stroke="#f0f000" stroke-width="2"/>
<use href="#dm" x="679" y="427"/><use href="#dm" x="853" y="427"/><use href="#dm" x="1027" y="427"/>
<rect x="490" y="470" width="727" height="9" fill="none" stroke="#f0f000" stroke-width="1.800"/>
<path d="M507 471H1198" stroke="#fff" stroke-width="1"/>
<path d="M573 471V479M649 471V479M711 471V479M787 471V479M918 471V479M994 471V479M1056 471V479M1132 471V479" stroke="#f00" stroke-width="2"/>
<g fill="none" stroke="#e8e800" stroke-width="1.700">
<path d="M506 479V634M1200 479V634M1360 541V634" stroke="#f0f000"/>
<path d="M418 633.700H1384" stroke="#c8c800" stroke-width="1.300"/>
<use href="#ws" x="525" y="486"/><use href="#ws" x="662.500" y="486"/><use href="#ws" x="800.500" y="486"/><use href="#ws" x="869.500" y="486"/><use href="#ws" x="1007.500" y="486"/><use href="#ws" x="1146" y="486"/>
<use href="#ws" x="525" y="548"/><use href="#ws" x="662.500" y="548"/><use href="#ws" x="800.500" y="548"/><use href="#ws" x="869.500" y="548"/><use href="#ws" x="1007.500" y="548"/><use href="#ws" x="1146" y="548"/>
<use href="#wsb" x="525" y="612"/><use href="#wsb" x="662.500" y="612"/><use href="#wsb" x="800.500" y="612"/><use href="#wsb" x="869.500" y="612"/><use href="#wsb" x="1007.500" y="612"/><use href="#wsb" x="1146" y="612"/>
<use href="#wl" x="589" y="484"/><use href="#wl" x="727" y="484"/><use href="#wr" x="926" y="484"/><use href="#wr" x="1064" y="484"/>
<use href="#wl" x="589" y="548"/><use href="#wl" x="727" y="548"/><use href="#wr" x="926" y="548"/><use href="#wr" x="1064" y="548"/>
<use href="#wlb" x="589" y="610"/><use href="#wlb" x="727" y="610"/><use href="#wrb" x="926" y="610"/><use href="#wrb" x="1064" y="610"/>
<use href="#bl" x="574" y="516"/><use href="#bl" x="712" y="516"/><use href="#bl" x="919" y="516"/><use href="#bl" x="1057" y="516"/>
<use href="#bl" x="574" y="579"/><use href="#bl" x="712" y="579"/><use href="#bl" x="919" y="579"/><use href="#bl" x="1057" y="579"/>
<use href="#ws" x="1263" y="548.700"/><use href="#wsb" x="1263" y="612"/>
<rect x="1200" y="532.700" width="193" height="9" stroke-width="1.400"/>
<path d="M1361 578.700H1392V608H1361M1361 600H1392" stroke-width="1.300"/>
<path d="M903.600 642.700L911 634 912 636 919 624" stroke-width="1"/>
</g>
<!-- annex roof -->
<g fill="none" stroke="#d00000" stroke-width="1.200"><path d="M1310 505H1357V513H1310zM1353 513V532M1318 505V513M1326 505V513M1334 505V513M1342 505V513"/></g>
<polygon points="1280,491.700 1363,532 1201,532" fill="url(#rf)"/>
<path d="M1201 532.500L1280 491.700 1363 533" fill="none" stroke="#f00" stroke-width="1.700"/>
<g fill="none" stroke="#e00000" stroke-width="1.400"><path d="M1263 512.700L1280 505 1297 512.700z" fill="#000"/><rect x="1266" y="513" width="29" height="15" fill="url(#sl)"/><path d="M1280.500 513V528"/></g>
<path d="M1201 533H1360" stroke="#f0f000" stroke-width="1.800"/>
<path d="M1378 533V541" stroke="#d00" stroke-width="2"/>
<path d="M1200 470H1240M1392 532.700H1417" stroke="#e0e0e0" stroke-width="1"/>
<g stroke="#00c000" stroke-width="1.200" fill="none"><path d="M1227 463.700H1263M1228 464L1234 470 1240 464M1403 526.700H1439M1404 527L1410 533 1416 527"/></g>
<text x="1238" y="462" font-size="9" textLength="21" lengthAdjust="spacingAndGlyphs" style="fill:#00e000">15.000</text>
<text x="1414" y="525" font-size="9" textLength="21" lengthAdjust="spacingAndGlyphs" style="fill:#00e000">12.000</text>
<g fill="none" stroke="#a8a800" stroke-width="1.300">
<path d="M458 380.700H573L595 430"/>
<path d="M987 391H904.500L864 437"/>
<path d="M1452.700 450H1337.700L1299 528" stroke="#c8c800" stroke-width="1"/>
<path d="M458 763H573L594.600 841.700" stroke="#d8d800" stroke-width="1"/>
<path d="M839 796H756.800V913" stroke="#d8d800" stroke-width="1"/>
<path d="M966 831.700H850.700L828.600 910" stroke="#d8d800" stroke-width="1"/>
</g>
<text class="cad" x="464" y="374" font-size="21" textLength="86" lengthAdjust="spacingAndGlyphs">红色建研彩瓦</text>
<text class="cad" x="913.500" y="384" font-size="21" textLength="44" lengthAdjust="spacingAndGlyphs">老虎窗</text>
<text class="cad" x="1356" y="444" font-size="21" textLength="86" lengthAdjust="spacingAndGlyphs">红色建研彩瓦</text>
<text class="cad" x="824" y="689" font-size="22" textLength="80" lengthAdjust="spacingAndGlyphs">南立面图</text>
<text x="928" y="687" font-size="19" textLength="40" lengthAdjust="spacingAndGlyphs" style="fill:#a8c860">1:100</text>
<path d="M800 696H986" stroke="#f0f000" stroke-width="1.800"/>
<text class="cad sub" x="816" y="715" font-size="13" textLength="156" lengthAdjust="spacingAndGlyphs">（坡屋顶下立面为示意图）</text>
<text class="cad" x="1188" y="696" font-size="25" textLength="96" lengthAdjust="spacingAndGlyphs">设计说明</text>
<path d="M1161 708.700H1326" stroke="#eee" stroke-width="1.600"/>

<!-- EAST ELEVATION -->
<g fill="none" stroke="#d00000" stroke-width="1.400"><rect x="540" y="818" width="164.600" height="10.700"/><path d="M543 829V845M701.400 829V837"/><rect x="629" y="897.700" width="267.400" height="7.300"/><path d="M632 905V922M893 905V922"/></g>
<polygon points="622,806 731,862 513,862" fill="#000"/>
<polygon points="622,806 731,862 513,862" fill="url(#ry)"/>
<path d="M513 862.700L622 806 731 862.700" fill="none" stroke="#f0f000" stroke-width="2"/>
<path d="M540 848L585 825" stroke="#f00" stroke-width="1.300"/>
<use href="#dm" x="622" y="819"/>
<g fill="none" stroke="#f0f000" stroke-width="1.700">
<rect x="480" y="862.700" width="270" height="9"/>
<path d="M512 871.700V1020M732 871.700V886.700"/>
<path d="M474 1020.300H925" stroke="#e0e000" stroke-width="1.400"/>
<path d="M480 908H511.500M481 908V938H511.500M481 929H511.500M480 970.700H511.500M481 970.700V1001H511.500M481 992H511.500" stroke-width="1.200"/>
</g>
<polygon points="693,887 834,887 900.700,925 624,925" fill="#000"/>
<polygon points="693,887 834,887 900.700,925 624,925" fill="url(#rf)"/>
<path d="M624 925L693 887H834L900.700 925" fill="none" stroke="#f0f000" stroke-width="1.800"/>
<use href="#dm" x="762.500" y="897.700"/>
<g fill="none" stroke="#f0f000" stroke-width="1.700">
<rect x="605.700" y="925.300" width="314.300" height="8.700"/>
<path d="M623.600 934V1020M902 934V1020M761.400 934V971M765 934V971M761.400 1001V1020M765 1001V1020" stroke-width="1.600"/>
<use href="#ws" x="640" y="941"/><use href="#ws" x="849" y="941"/>
<path d="M640 1020V1004H676.400V1020M640 1015H676.400M658 1015V1020M849 1020V1004H885V1020M849 1015H885M867 1015V1020"/>
<path d="M705 971V939H758V971M705 951.700H758M740 939V971M723 951.700V971"/>
<path d="M767.500 971V939H820.400V971M767.500 951.700H820.400M785 939V971M802.500 951.700V971"/>
<rect x="689" y="970.700" width="146.700" height="30.300" stroke-width="1.400"/><path d="M689 992H835.700" stroke-width="1.200"/>
<path d="M705 1020V1002H758V1020M705 1015H758M740 1002V1020M723 1015V1020M767.500 1020V1002H820.400V1020M767.500 1015H820.400M785 1002V1020M802.500 1015V1020"/>
<path d="M683.600 1029L692 1020 692.500 1022 699.600 1011" stroke-width="1"/>
</g>
<text class="cad" x="464" y="758" font-size="21" textLength="86" lengthAdjust="spacingAndGlyphs">红色建研彩瓦</text>
<text class="cad" x="768.500" y="787" font-size="21" textLength="42" lengthAdjust="spacingAndGlyphs">老虎窗</text>
<text class="cad" x="860.700" y="826" font-size="21" textLength="86" lengthAdjust="spacingAndGlyphs">红色建研彩瓦</text>
<text class="cad" x="609" y="1069" font-size="22" textLength="79" lengthAdjust="spacingAndGlyphs">东立面图</text>
<text x="713" y="1067" font-size="19" textLength="41" lengthAdjust="spacingAndGlyphs" style="fill:#c8d890">1:100</text>
<path d="M585.700 1075.700H772" stroke="#f0f000" stroke-width="1.800"/>
<text class="cad sub" x="586" y="1095" font-size="13" textLength="154" lengthAdjust="spacingAndGlyphs">（坡屋顶下立面为示意图）</text>

<!-- notes -->
<g>
<text class="n" x="1126" y="747" textLength="26" lengthAdjust="spacingAndGlyphs">一、概况:</text>
<text class="n" x="1138" y="762" textLength="197" lengthAdjust="spacingAndGlyphs">为了解决屋顶渗漏问题,同时为了改善顶层室内温度条件,美化</text>
<text class="n" x="1138" y="775" textLength="139" lengthAdjust="spacingAndGlyphs">城市景观,对该楼原屋顶进行"平改坡"改造</text>
<text class="n" x="1126" y="791" textLength="26" lengthAdjust="spacingAndGlyphs">二、规模:</text>
<text class="n" x="1145" y="806" textLength="178" lengthAdjust="spacingAndGlyphs">根据该建筑原图纸计算,屋顶面积为<tspan>569.27</tspan>平方米</text>
<text class="n" x="1145" y="819" textLength="170" lengthAdjust="spacingAndGlyphs">但经实际测量,该建筑屋顶面积为<tspan>577.94</tspan>平方米</text>
<text class="n" x="1126" y="831" textLength="40" lengthAdjust="spacingAndGlyphs">三、施工说明:</text>
<text class="n" x="1144" y="846" textLength="140" lengthAdjust="spacingAndGlyphs"><tspan>1</tspan>.本图屋面老虎窗形式由规划有关部门确定</text>
<text class="n" x="1144" y="861" textLength="41" lengthAdjust="spacingAndGlyphs"><tspan>2</tspan>.材料选用</text>
<text class="n" x="1156" y="875" textLength="165" lengthAdjust="spacingAndGlyphs">屋架和 条檩钢材应符合国家相应的有关规范和标准</text>
<text class="n" x="1156" y="890" textLength="84" lengthAdjust="spacingAndGlyphs">焊条采用<tspan>E43</tspan>系列焊条</text>
<text class="n" x="1156" y="906" textLength="209" lengthAdjust="spacingAndGlyphs">角钢型号按《&lt;热轧等边角钢尺寸,外型,重量及允许偏差&gt;&gt;选用</text>
<text class="n" x="1144" y="921" textLength="208" lengthAdjust="spacingAndGlyphs"><tspan>3</tspan>.屋面瓦确定后,其脊瓦和阴角瓦应与所选屋面瓦配套,屋面瓦的</text>
<text class="n" x="1156" y="936" textLength="88" lengthAdjust="spacingAndGlyphs">施工按生产厂家的要求进行</text>
<text class="n" x="1144" y="951" textLength="38" lengthAdjust="spacingAndGlyphs"><tspan>4</tspan>.施工要求:</text>
<text class="n" x="1156" y="966" textLength="203" lengthAdjust="spacingAndGlyphs">未注明的焊缝均为角焊缝,焊角尺寸为<tspan>5</tspan>毫米,焊缝长度一律满焊</text>
<text class="n" x="1156" y="980" textLength="102" lengthAdjust="spacingAndGlyphs">所有杆件与节点板之间均需焊接</text>
<text class="n" x="1144" y="994" textLength="80" lengthAdjust="spacingAndGlyphs"><tspan>5</tspan>.制作,运输和安装要求:</text>
<text class="n" x="1156" y="1009" textLength="204" lengthAdjust="spacingAndGlyphs">构件按《&lt;钢结构工程施工及验收规范&gt;&gt;进行制作,安装和验收</text>
<text class="n" x="1156" y="1023" textLength="125" lengthAdjust="spacingAndGlyphs">所有构件必须认真除锈并刷防锈漆两遍</text>
<text class="n" x="1144" y="1037" textLength="26" lengthAdjust="spacingAndGlyphs"><tspan>6</tspan>.其他:</text>
<text class="n" x="1156" y="1052" textLength="197" lengthAdjust="spacingAndGlyphs">该屋面为铁质,故在各阳角屋架处设置一根<tspan>Ø10</tspan>钢筋与原屋面</text>
<text class="n" x="1171" y="1066" textLength="128" lengthAdjust="spacingAndGlyphs">避雷系统可靠焊接,即可满足防雷电要求</text>
</g>

<!-- viewcube -->
<circle cx="1526" cy="214" r="54" fill="none" stroke="#2b2b2b" stroke-width="12.500"/>
<rect x="1500" y="189" width="52" height="52" fill="#9c9c9c" stroke="#777" stroke-width="1"/>
<rect x="1510" y="199" width="32" height="32" fill="#8a8c90"/>
<path d="M1524 204V224M1511 224H1540M1526 212H1538" stroke="#5c5c5c" stroke-width="1.500" fill="none"/>
<g font-size="19" text-anchor="middle">
<text x="1526" y="167" style="fill:#a0a0a0">北</text><text x="1526" y="280" style="fill:#a0a0a0">南</text><text x="1582" y="223" style="fill:#a0a0a0">东</text><text x="1469" y="223" style="fill:#a0a0a0">西</text>
</g>
<rect x="1502.500" y="302.500" width="47" height="17" rx="4" fill="#77777f" stroke="#55555b"/>
<text x="1506" y="315" font-size="10.500" textLength="24" style="fill:#3f3f44">WCS</text>
<path d="M1537 308H1546L1541.500 313z" fill="#9a9aa0"/>

<!-- UCS -->
<path d="M61 1259V1309M61 1309H112" stroke="#f2f2f2" stroke-width="1"/>
<rect x="57.500" y="1305" width="9" height="8.500" fill="none" stroke="#f2f2f2"/>
<path d="M63 1243L69 1250 75 1243M69 1250V1256M117 1295L130 1310M130 1295L117 1310" fill="none" stroke="#d8d8d8" stroke-width="1.100"/>

<!-- Left toolbar icons -->
<g transform="translate(16 0)">
<g fill="#e0e2e6"><rect x="-8" y="136" width="1" height="1"/><rect x="-6" y="136" width="1" height="1"/><rect x="-4" y="136" width="1" height="1"/><rect x="-2" y="136" width="1" height="1"/><rect x="0" y="136" width="1" height="1"/><rect x="2" y="136" width="1" height="1"/><rect x="4" y="136" width="1" height="1"/><rect x="6" y="136" width="1" height="1"/><rect x="-8" y="138" width="1" height="1"/><rect x="-6" y="138" width="1" height="1"/><rect x="-4" y="138" width="1" height="1"/><rect x="-2" y="138" width="1" height="1"/><rect x="0" y="138" width="1" height="1"/><rect x="2" y="138" width="1" height="1"/><rect x="4" y="138" width="1" height="1"/><rect x="6" y="138" width="1" height="1"/></g>
<path d="M-7 160L7 146" class="l"/><use href="#dot" x="-7" y="160"/><use href="#dot" x="0" y="153"/><use href="#dot" x="7" y="146"/>
<path d="M-8 183V177L-3 182zM8 167V173L3 168z" fill="#d6d6d6"/><path d="M-5 180L5 170" class="l" stroke-dasharray="3 2"/><use href="#dot" x="0" y="175"/>
<path d="M-5 202H0M2 192H4A5 5 0 0 1 4 202" class="l"/><use href="#dot" x="-7" y="202"/><use href="#dot" x="1" y="202"/><use href="#dot" x="2" y="192"/>
<path d="M0 211L8 217 5 226H-5L-8 217z" class="l"/><use href="#dot" x="0" y="217"/><use href="#dot" x="4" y="225"/>
<rect x="-6" y="236" width="13" height="10" class="l"/><use href="#dot" x="-6" y="236"/><use href="#dot" x="7" y="246"/>
<path d="M-6 268C-5 261 0 258 7 257" class="l"/><use href="#dot" x="-6" y="270"/><use href="#dot" x="7" y="257"/>
<circle cy="285" r="7.500" class="l"/><use href="#dot" x="0" y="285"/><use href="#dot" x="4" y="281"/>
<path d="M-7 305C-9 301-3 300 0 301 3 299 6 303 7 305 9 308 7 312 3 311 0 314-4 313-6 311-9 310-8 307-7 305z" class="l"/>
<path d="M-7 335L-4 326 3 332 7 324" class="l" stroke-dasharray="3 1"/><use href="#dot" x="-7" y="335"/><use href="#dot" x="-4" y="326"/><use href="#dot" x="4" y="332"/><use href="#dot" x="7" y="324"/>
<ellipse cy="351" rx="7.500" ry="4.500" class="l" stroke-dasharray="4 1.500"/><use href="#dot" x="-7" y="351"/><use href="#dot" x="7" y="351"/><use href="#dot" x="0" y="346"/>
<path d="M-1 377A4.500 4.500 0 1 1 3 368H1" class="l" stroke-dasharray="3 1"/><use href="#dot" x="-1" y="377"/><use href="#dot" x="6" y="372"/><use href="#dot" x="-1" y="372"/>
<g transform="translate(0 16)"><path d="M-1 378V387L8 382V363H4V368H-1z" fill="#6db5f5"/><rect x="-7" y="372" width="10" height="8" class="l"/><circle cx="3" cy="381" r="3.500" fill="#888" stroke="#ddd"/></g>
<g transform="translate(0 22)"><rect x="-7" y="394" width="10" height="9" class="l"/><circle cx="4" cy="403" r="3.500" fill="#888" stroke="#ddd"/><path d="M4 388V398M-1 393H9M1 390L7 396M7 390L1 396" stroke="#eab05c" stroke-width="1.400"/></g>
<path d="M0 433v2M-5 438h2M3 438h2M0 442v2" stroke="#ccc" stroke-width="2"/>
<g transform="translate(0 23)"><rect x="-6" y="432" width="12" height="12" fill="#6db5f5"/><path d="M-7 430V446M7 430V446M-9 432H9M-9 444H9" class="l"/></g>
<g transform="translate(0 22)"><rect x="-6" y="455" width="12" height="12" fill="url(#gd)"/><path d="M-7 453V469M7 453V469M-9 455H9M-9 467H9" class="l"/></g>
<path d="M-8 497H2L8 503V511H-8z" fill="#dcdcdc"/><circle cx="0" cy="504" r="2.500" fill="#3a4352"/>
<path d="M-8 520H8V534H-8zM-8 525H8M-8 529.500H8M-3 520V534M3 520V534" fill="none" stroke="#cfcfcf" stroke-width="1.100"/>
<text y="556" text-anchor="middle" font-size="20" font-weight="bold" style="fill:#cfcfcf">A</text>
<circle cx="-5" cy="566" r="3.500" fill="#5fdc7c"/><circle cx="5" cy="576" r="3.500" fill="#74bdf5"/><path d="M0 566H4V571M2 569L4 571 6 569" stroke="#eee" fill="none"/>
</g>

<!-- Right toolbar icons -->
<g transform="translate(1625 0)">
<g fill="#e0e2e6"><rect x="-8" y="136" width="1" height="1"/><rect x="-6" y="136" width="1" height="1"/><rect x="-4" y="136" width="1" height="1"/><rect x="-2" y="136" width="1" height="1"/><rect x="0" y="136" width="1" height="1"/><rect x="2" y="136" width="1" height="1"/><rect x="4" y="136" width="1" height="1"/><rect x="6" y="136" width="1" height="1"/><rect x="-8" y="138" width="1" height="1"/><rect x="-6" y="138" width="1" height="1"/><rect x="-4" y="138" width="1" height="1"/><rect x="-2" y="138" width="1" height="1"/><rect x="0" y="138" width="1" height="1"/><rect x="2" y="138" width="1" height="1"/><rect x="4" y="138" width="1" height="1"/><rect x="6" y="138" width="1" height="1"/></g>
<path d="M-3 157L6 145 8 147 1 159z" fill="#eab05c"/><path d="M-5 160L-1 156 1 159-2 161z" fill="#e05060"/><path d="M-8 161H8" class="b"/>
<circle cx="-6" cy="170" r="3" class="l"/><path d="M-3 169H4V174M2 172L4 174 6 172" class="l"/><circle cx="-2" cy="180" r="3" class="b"/><circle cx="4" cy="180" r="3" class="b"/>
<path d="M-1 190V205H-8z" fill="none" stroke="#d6d6d6"/><path d="M1 190V205H8z" fill="none" stroke="#6db5f5" stroke-width="1.200"/>
<path d="M8 212H-3A7 7 0 0 0-3 226H8M8 216H-3A3 3 0 0 0-3 222H8" class="b"/><path d="M8 219H-3" class="l"/>
<rect x="-7" y="234" width="5" height="5" class="l"/><rect x="2" y="234" width="5" height="5" class="b"/><rect x="-7" y="243" width="5" height="5" class="b"/><rect x="2" y="243" width="5" height="5" class="b"/><path d="M4 250H8V246z" fill="#fff"/>
<path d="M-7 262H7M0 255V269" stroke="#eee" stroke-width="1.400"/><path d="M-8 262L-5 259V265zM8 262L5 259V265zM0 254L-3 257H3zM0 270L-3 267H3z" fill="#eee"/>
<path d="M4 280A6.500 6.500 0 1 1-1 279" class="l"/><path d="M-1 276L4 279-1 283z" fill="#eee"/>
<rect x="-8" y="307" width="9" height="8.500" class="l"/><path d="M-8 307V299H8V315H1" class="b"/>
<path d="M-8 321H-2V330H4M-8 321V337H-2" class="l"/><path d="M-2 321H3L8 337H-2" class="b"/><path d="M-2 331H4M2 329L4 331 2 333" class="l"/>
<path d="M-8 344H8" class="b" stroke-dasharray="2 1"/><path d="M-3 343L4 356M4 343L-2 354" stroke="#eee" stroke-width="1.500"/><circle cx="-3" cy="358" r="2.200" class="l"/><circle cx="4" cy="358" r="2.200" class="l"/>
<path d="M8 365V381" class="l"/><path d="M-8 372H6M-8 375H6" class="b" stroke-dasharray="3 1"/><path d="M0 372H6M3 369L6 372 3 375" class="l"/>
<path d="M-8 391H3M8 391V404H-8V391" class="l"/><path d="M3 387V391" class="b"/>
<path d="M-8 409H-3M3 409H8M8 409V426H-8V409M-3 410V415M3 410V415" class="l"/>
<path d="M-8 439H8M-2 436L1 439-2 442M3 436L0 439 3 442" class="b"/>
<path d="M-8 468V462M5 451H8" class="l"/><path d="M-8 461L3 452" class="b"/>
<path d="M-8 490V482M2 474H8" class="l"/><path d="M-8 482A8 8 0 0 1 0 475" class="b"/>
<path d="M-7 512V504M7 497V490" class="l"/><path d="M-7 501C-2 496 0 507 7 498" class="b"/>
<rect x="-8" y="521" width="12" height="12" class="b"/><path d="M-8 521L-3 516H8V529L4 533M4 521L8 516" class="b"/><rect x="-5" y="524" width="6" height="6" class="l"/>
</g>

<!-- command history -->
<rect x="338" y="1253" width="106" height="15" rx="2" fill="#4f4f4f"/>
<rect x="338" y="1273" width="198" height="15" rx="2" fill="#4f4f4f"/>
<rect x="338" y="1293" width="270" height="15" rx="2" fill="#555"/>
<text class="cm" x="340" y="1265" textLength="101">命令: _textedit</text>
<text class="cm" x="340" y="1285" textLength="193">当前设置: 编辑模式 = Multiple</text>
<text class="cm" x="340" y="1305" textLength="266" style="fill:#e0e0e0">选择注释对象或 [放弃(U)/模式(M)]: *取消*</text>

<!-- command bar -->
<rect x="275" y="1311" width="56" height="27" rx="2" fill="#2b3139"/>
<use href="#hd" x="281" y="1325"/>
<path d="M291 1320L298 1329M298 1320L291 1329" stroke="#c8ccd2" stroke-width="1.400"/>
<path d="M311 1336L319 1324C317 1319 321 1316 326 1317L322 1321 324 1323 327 1320C329 1324 325 1328 321 1326L315 1337z" fill="#c8c8c8"/>
<rect x="331" y="1311.500" width="1035" height="26" rx="2" fill="#b0b0b0" stroke="#333"/>
<rect x="336" y="1319" width="15" height="12" fill="none" stroke="#3b3b3b"/><path d="M336 1322H351M338 1325L340 1327 338 1329" stroke="#3b3b3b" fill="none"/>
<path d="M353 1323.500H360L356.500 1327.500z" fill="#3b3b3b"/>
<text x="369" y="1329" font-size="12.500" font-style="italic" textLength="52" style="fill:#6c6c6c">键入命令</text>
<path d="M1125 1337L1147 1327 1153 1337M1147 1323L1149 1330" stroke="#e8e8a0" fill="none" stroke-width="1.200"/>
<path d="M1355 1326.500H1363L1359 1321.500z" fill="#3b3b3b"/>

<!-- bottom: tabs + status bar -->
<rect y="1338" width="1645" height="33" fill="#262b33"/>
<rect x="0" y="1338" width="1609" height="1" fill="#4a5260"/>
<rect y="1369" width="1645" height="2" fill="#0696d7"/>
<path d="M16 1339H61L60 1352C59 1356 56 1356 54 1356H24C21 1356 19 1355 18 1350z" fill="#3a4352"/>
<path d="M66 1339H112L110 1352C109 1356 106 1356 104 1356H73C70 1356 68 1354 68 1350z" fill="#343c4a"/>
<path d="M124 1339H142L140 1350C139 1356 134 1356 130 1356H120C124 1352 122 1345 124 1339z" fill="#343c4a"/>
<text x="26.500" y="1352" font-size="12" textLength="24" font-weight="bold" style="fill:#eee">模型</text>
<text x="74" y="1352" font-size="12" textLength="30" style="fill:#b4bac4">布局1</text>
<path d="M132 1342V1352M127 1347H137" stroke="#b4bac4" stroke-width="1.800"/>

<g class="sb">
<rect x="344" y="1340" width="210" height="24"/><rect x="557" y="1340" width="31" height="24"/><rect x="590" y="1340" width="65" height="24"/>
<rect x="657" y="1340" width="50" height="24"/><rect x="708" y="1340" width="103" height="24"/><rect x="812" y="1340" width="64" height="24"/><rect x="877" y="1340" width="115" height="24"/>
<rect x="995" y="1340" width="104" height="24"/><rect x="1101" y="1340" width="147" height="24"/><rect x="1251" y="1340" width="39" height="24"/><rect x="1292" y="1340" width="24" height="24"/><rect x="1319" y="1340" width="96" height="24"/><rect x="1417" y="1340" width="24" height="24"/><rect x="1444" y="1340" width="39" height="24"/><rect x="1485" y="1340" width="24" height="24"/><rect x="1512" y="1340" width="77" height="24"/><rect x="1591" y="1340" width="49" height="24"/>
</g>
<g class="hi"><rect x="683" y="1341" width="23" height="22"/><rect x="837" y="1341" width="22" height="22"/><rect x="903" y="1341" width="23" height="22"/><rect x="1060" y="1341" width="22" height="22"/><rect x="1103" y="1341" width="22" height="22"/><rect x="1512" y="1341" width="23" height="22"/></g>
<text class="st" x="368.500" y="1356" textLength="180" lengthAdjust="spacingAndGlyphs">50438.3302, 53642.3227, 0.0000</text>
<text class="st" x="560" y="1356" textLength="23" lengthAdjust="spacingAndGlyphs">模型</text>
<path d="M596 1346H608M596 1350H608M596 1354H608M596 1358H608M598 1344V1360M602 1344V1360M606 1344V1360" fill="none" stroke="#e4e6ea" stroke-width="1"/>
<path d="M621 1346h2v2h-2zM626 1346h2v2h-2zM631 1346h2v2h-2zM621 1351h2v2h-2zM626 1351h2v2h-2zM631 1351h2v2h-2zM621 1356h2v2h-2zM626 1356h2v2h-2zM631 1356h2v2h-2z" fill="#e4e6ea"/>
<g fill="#c8ccd2"><use href="#ar" x="646" y="1352"/><use href="#ar" x="763" y="1352"/><use href="#ar" x="803" y="1352"/><use href="#ar" x="868" y="1352"/><use href="#ar" x="983" y="1352"/><use href="#ar" x="1051" y="1352"/><use href="#ar" x="1091" y="1352"/><use href="#ar" x="1240.500" y="1352"/><use href="#ar" x="1282" y="1352"/><use href="#ar" x="1408" y="1352"/><use href="#ar" x="1476" y="1352"/></g>
<rect x="662" y="1353" width="7" height="7" fill="#ddd"/><path d="M669 1353V1344H677V1351H669" fill="none" stroke="#ddd" stroke-width="1.300"/>
<path d="M686 1348H691M688.500 1345V1351" stroke="#fff" stroke-width="1.200"/><rect x="691" y="1353" width="10" height="5" fill="#fff"/>
<path d="M713 1344V1358H727" fill="none" stroke="#ddd" stroke-width="1.300"/><path d="M713 1353H718V1358" fill="none" stroke="#ddd"/>
<circle cx="742" cy="1353" r="6.500" fill="none" stroke="#ddd" stroke-width="1.300"/><path d="M739 1358L748 1344M742 1353H751" stroke="#ddd"/>
<path d="M775 1344L788 1361" stroke="#e05050" stroke-width="1.200"/><path d="M783 1344V1361" stroke="#4cb050" stroke-width="1.200"/><circle cx="782" cy="1352" r="2" fill="#ddd"/>
<path d="M816 1360L824 1346M816 1360H830M820 1360A8 8 0 0 0 819 1352" fill="none" stroke="#ddd" stroke-width="1.300"/>
<rect x="841.500" y="1345" width="14" height="16" fill="none" stroke="#eee" stroke-width="1.300"/><rect x="838" y="1341.500" width="6" height="6" fill="#5f8fc4" stroke="#eee"/>
<path d="M882 1345h16v3h-16zM882 1350h12v3h-12zM882 1355h7v3h-7z" fill="#dadada"/>
<rect x="907" y="1345" width="15" height="15" fill="#f3f3f3"/><path d="M907 1345h3v3h-3zM913 1345h3v3h-3zM919 1345h3v3h-3zM910 1348h3v3h-3zM916 1348h3v3h-3zM907 1351h3v3h-3zM913 1351h3v3h-3zM919 1351h3v3h-3zM910 1354h3v3h-3zM916 1354h3v3h-3zM907 1357h3v3h-3zM913 1357h3v3h-3zM919 1357h3v3h-3z" fill="#4e7daf"/>
<path d="M932 1344V1350M929 1347H935" stroke="#ddd"/><path d="M936 1351L945 1350V1363H936z" fill="#78d59b"/><path d="M934 1347L941 1350" stroke="#ddd"/>
<path d="M958 1348L964 1344H974V1356L968 1361H958zM958 1348H968V1361M968 1348L974 1344" fill="none" stroke="#ddd" stroke-width="1.100"/><rect x="956.500" y="1355" width="5" height="7" fill="none" stroke="#eab05c" stroke-width="1.200"/>
<path d="M1001 1344V1358H1015M1001 1344L998 1348M1001 1344L1004 1348M1015 1358L1011 1355M1015 1358L1011 1361" fill="none" stroke="#ddd" stroke-width="1.300"/><path d="M1008 1344L1004 1350H1007L1004 1355 1010 1349H1007z" fill="#fff"/>
<rect x="1023" y="1346" width="14" height="13" fill="none" stroke="#ddd" stroke-dasharray="4 2"/><g fill="#6db5f5"><rect x="1021" y="1344" width="4" height="4"/><rect x="1035" y="1344" width="4" height="4"/><rect x="1021" y="1357" width="4" height="4"/><rect x="1035" y="1357" width="4" height="4"/></g>
<path d="M1071 1343L1079 1348V1357L1071 1361 1063 1357V1348zM1071 1352L1066 1358M1071 1352L1076 1358M1071 1352V1346" fill="none" stroke="#fff" stroke-width="1.300"/>
<path d="M1105 1361L1113 1345 1121 1361 1113 1354z" fill="#fff"/><circle cx="1120" cy="1346" r="2.500" fill="none" stroke="#fff"/>
<path d="M1130 1361L1138 1345 1146 1361 1138 1354z" fill="#ddd"/><path d="M1142 1345V1351M1139 1348H1145" stroke="#ddd"/>
<path d="M1154 1361L1162 1345 1170 1361 1162 1354z" fill="#ddd"/>
<text class="st" x="1178" y="1356" textLength="55" lengthAdjust="spacingAndGlyphs">1:1 / 100%</text>
<g transform="translate(1262 1352)"><circle r="5" fill="none" stroke="#e8e8e8" stroke-width="3"/><path d="M0-9V-6M0 6V9M-9 0H-6M6 0H9M-6-6L-4-4M6-6L4-4M-6 6L-4 4M6 6L4 4" stroke="#e8e8e8" stroke-width="2.400"/></g>
<path d="M1304 1343V1361M1294 1352H1314" stroke="#e8e8e8" stroke-width="1.800"/>
<path d="M1327 1344H1335V1361H1327zM1331 1347H1335M1329 1350H1335M1331 1353H1335M1329 1356H1335" fill="#d8d8d8" stroke="#3a4352" stroke-width=".8"/>
<text class="st" x="1348" y="1356" textLength="24" lengthAdjust="spacingAndGlyphs" font-weight="bold">小数</text>
<rect x="1422.500" y="1344" width="13" height="16" fill="none" stroke="#ddd"/><path d="M1425 1347H1427M1429 1347H1433M1425 1351H1427M1429 1351H1433M1425 1355H1427M1429 1355H1433" stroke="#ddd"/>
<rect x="1448.500" y="1345" width="14" height="14" fill="none" stroke="#ddd"/><path d="M1448 1348H1463" stroke="#ddd" stroke-width="1.500"/><rect x="1457" y="1354" width="7" height="6" fill="#ddd"/><path d="M1460 1354V1351H1465" fill="none" stroke="#ddd"/>
<rect x="1490" y="1345" width="7" height="7" fill="none" stroke="#ddd"/><circle cx="1503" cy="1350" r="3" fill="none" stroke="#ddd"/><path d="M1495 1360L1498 1354 1501 1360z" fill="none" stroke="#ddd"/>
<circle cx="1523.500" cy="1352" r="8" fill="none" stroke="#f2f2f2" stroke-width="1.400"/><path d="M1520 1356L1528 1347" stroke="#f2f2f2" stroke-width="1.600"/>
<path d="M1541 1343H1552L1556 1350V1358H1541z" fill="#45699d"/><path d="M1542 1347H1554M1548 1343V1353" stroke="#fff"/><rect x="1541" y="1353" width="8" height="7" fill="#eeb33a"/><path d="M1549 1357L1552 1360 1558 1354" stroke="#49c46a" stroke-width="2" fill="none"/>
<rect x="1565" y="1344" width="15" height="15" fill="#aeaeae"/><path d="M1565 1352L1570 1347 1574 1351 1579 1346" stroke="#555" fill="none"/><path d="M1577 1349L1582 1360H1572z" fill="#ef9a58"/>
<rect x="1596.500" y="1345" width="15" height="14" fill="none" stroke="#ddd"/><path d="M1599 1356L1603 1352M1606 1349L1610 1346M1599 1356H1602M1599 1356V1353M1609 1347H1606M1609 1347V1350" stroke="#ddd"/>
<path d="M1619 1345H1634M1619 1352H1634M1619 1359H1634" stroke="#dcdcdc" stroke-width="2.200"/>
</svg>
</body></html>
